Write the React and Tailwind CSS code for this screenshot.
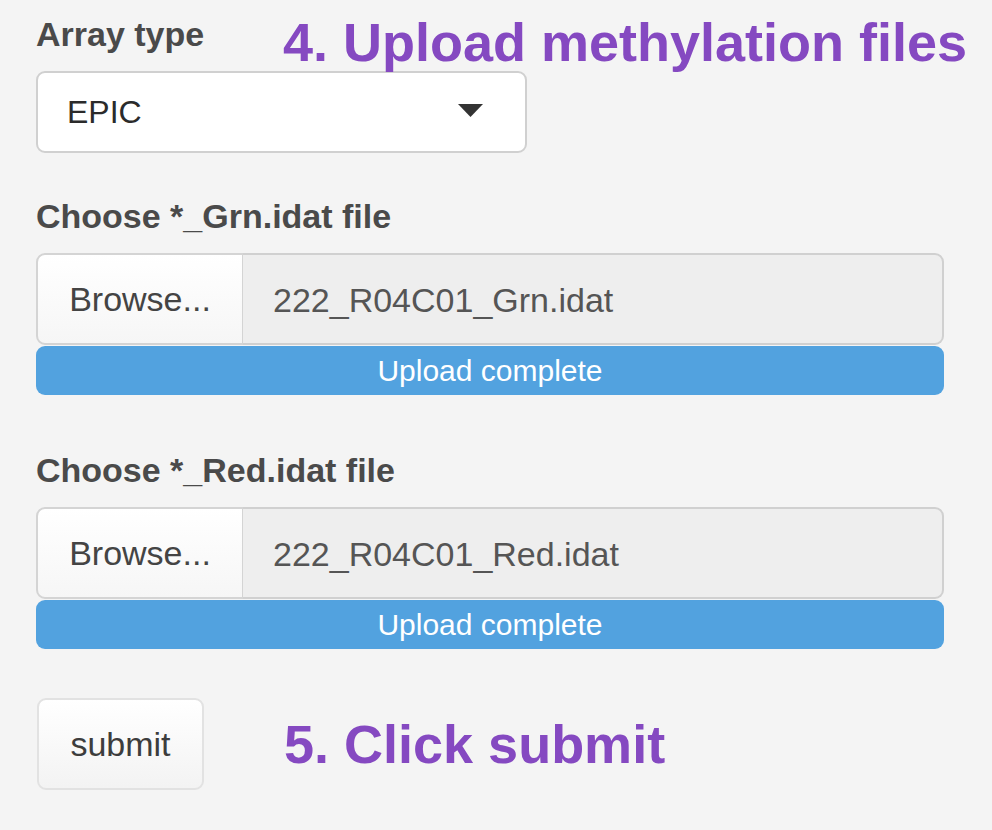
export default function App() {
  const files = [
    { label: 'Choose *_Grn.idat file', name: '222_R04C01_Grn.idat' },
    { label: 'Choose *_Red.idat file', name: '222_R04C01_Red.idat' },
  ];

  return (
    <div className="min-h-screen bg-[#f4f4f4] pl-[36px] pt-[15px] font-['Liberation_Sans',Helvetica,Arial,sans-serif]">
      {/* array type + step 4 note */}
      <div className="flex h-[56px] items-start">
        <div className="w-[247px] pt-[2px] text-[34px] font-bold leading-none text-[#4a4a4a]">Array type</div>
        <div className="text-[54px] font-bold leading-none text-[#8549c1]">4. Upload methylation files</div>
      </div>

      <div className="flex h-[82px] w-[491px] items-center justify-between rounded-[9px] border-2 border-[#d0d0d0] bg-white pl-[29px] pr-[42px]">
        <span className="text-[32px] text-[#2b2b2b]">EPIC</span>
        <svg width="25" height="13" viewBox="0 0 25 13" className="mb-[3px]">
          <path d="M0 0h25L12.5 13z" fill="#333" />
        </svg>
      </div>

      {files.map((f, i) => (
        <div key={i} className={i === 0 ? 'mt-[46px]' : 'mt-[58px]'}>
          <div className="text-[34px] font-bold leading-none text-[#4a4a4a]">{f.label}</div>
          <div className="mt-[20px] flex h-[92px] w-[908px]">
            <div className="flex w-[207px] items-center justify-center rounded-l-[9px] border-2 border-r border-[#d4d4d4] bg-gradient-to-b from-white to-[#f6f6f6] text-[34px] text-[#444]">
              Browse...
            </div>
            <div className="flex flex-1 items-center rounded-r-[9px] border-2 border-l-0 border-[#d0d0d0] bg-[#eeeeee] pl-[30px] pt-[3px] text-[34px] text-[#555]">
              {f.name}
            </div>
          </div>
          <div className="mt-[1px] flex h-[49px] w-[908px] items-center justify-center rounded-[9px] bg-[#52a2df] text-[30px] text-white">
            Upload complete
          </div>
        </div>
      ))}

      {/* submit + step 5 note */}
      <div className="mt-[49px] flex items-center">
        <button className="ml-[1px] flex h-[92px] w-[167px] items-center justify-center rounded-[9px] border-2 border-[#e2e2e2] bg-gradient-to-b from-white to-[#f3f3f3] text-[34px] text-[#3d3d3d]">
          submit
        </button>
        <div className="ml-[80px] text-[54px] font-bold leading-none text-[#8549c1]">5. Click submit</div>
      </div>
    </div>
  );
}
